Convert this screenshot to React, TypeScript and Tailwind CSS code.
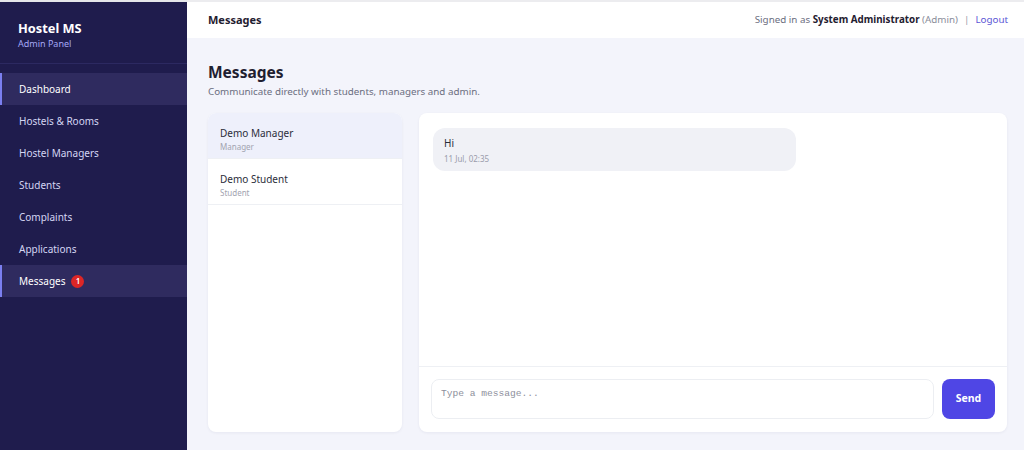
import { useState } from "react";

const navItems = [
    "Dashboard",
    "Hostels & Rooms",
    "Hostel Managers",
    "Students",
    "Complaints",
    "Applications",
    "Messages",
];

const conversations = [
    { name: "Demo Manager", role: "Manager" },
    { name: "Demo Student", role: "Student" },
];

export default function App() {
    const [active, setActive] = useState(0);
    const [draft, setDraft] = useState("");

    return (
        <div className="flex h-[450px] w-[1024px] overflow-hidden bg-[#f3f4fb] font-['Noto_Sans',sans-serif]">
            {/* Sidebar */}
            <aside className="flex w-[187px] shrink-0 flex-col border-t-2 border-[#e5e6ea] bg-[#1f1c4d]">
                <div className="h-[62px] border-b border-[#2c2961] px-[18px] pt-[18px]">
                    <div className="text-[12.8px] font-bold leading-[17px] text-white">Hostel MS</div>
                    <div className="text-[9px] leading-[13px] text-[#a5a8f5]">Admin Panel</div>
                </div>
                <nav className="mt-[9px] flex flex-col">
                    {navItems.map((item) => {
                        const isActive = item === "Dashboard" || item === "Messages";
                        return (
                            <div
                                key={item}
                                className={
                                    isActive
                                        ? "flex h-[32px] items-center gap-[6px] border-l-2 border-[#7b7ff0] bg-[#2f2b5f] pl-[17px] text-[10px] text-white"
                                        : "flex h-[32px] items-center gap-[6px] border-l-2 border-transparent pl-[17px] text-[10px] text-[#d4d5f3]"
                                }
                            >
                                <span>{item}</span>
                                {item === "Messages" && (
                                    <span className="flex h-[13px] w-[13px] items-center justify-center rounded-full bg-[#dc2626] text-[8px] font-semibold leading-none text-white">
                                        1
                                    </span>
                                )}
                            </div>
                        );
                    })}
                </nav>
            </aside>

            {/* Main */}
            <div className="flex flex-1 flex-col">
                <header className="flex h-[38px] shrink-0 items-center justify-between border-t-2 border-[#ececef] bg-white pl-[21px] pr-[16px]">
                    <div className="text-[11px] font-bold text-[#1f2030]">Messages</div>
                    <div className="text-[9.8px] text-[#6b6e80]">
                        Signed in as <span className="font-bold text-[#1f2030]">System Administrator</span>{" "}
                        <span className="text-[#8a8d9a]">(Admin)</span>
                        <span className="mx-[6px] text-[#9a9cab]">|</span>
                        <span className="text-[#5b57d6]">Logout</span>
                    </div>
                </header>

                <main className="flex flex-1 flex-col pb-[18px] pl-[21px] pr-[17px] pt-[23px]">
                    <h1 className="text-[15.5px] font-bold leading-[22px] text-[#1f2030]">Messages</h1>
                    <p className="mt-[1px] text-[9.8px] leading-[16px] text-[#6b6e80]">
                        Communicate directly with students, managers and admin.
                    </p>

                    <div className="mt-[13px] flex flex-1 gap-[17px]">
                        {/* Conversation list */}
                        <div className="w-[194px] shrink-0 overflow-hidden rounded-lg bg-white shadow-[0_1px_3px_rgba(30,30,80,0.06)]">
                            {conversations.map((c, i) => (
                                <button
                                    key={c.name}
                                    onClick={() => setActive(i)}
                                    className={
                                        i === active
                                            ? "block h-[46px] w-full border-b border-[#eef0f4] bg-[#eef0fb] px-[12px] pt-[7px] text-left"
                                            : "block h-[46px] w-full border-b border-[#eef0f4] bg-white px-[12px] pt-[7px] text-left"
                                    }
                                >
                                    <div className="text-[10px] leading-[14px] text-[#2b2d3a]">{c.name}</div>
                                    <div className="mt-[1px] text-[8px] leading-[12px] text-[#a2a4b0]">{c.role}</div>
                                </button>
                            ))}
                        </div>

                        {/* Chat panel */}
                        <div className="flex flex-1 flex-col overflow-hidden rounded-lg bg-white shadow-[0_1px_3px_rgba(30,30,80,0.06)]">
                            <div className="flex-1 px-[14px] pt-[15px]">
                                <div className="h-[43px] w-[363px] rounded-xl bg-[#f0f1f6] px-[11px] pt-[8px]">
                                    <div className="text-[10px] leading-[14px] text-[#2b2d3a]">Hi</div>
                                    <div className="mt-[3px] text-[8px] leading-[11px] text-[#9a9cab]">11 Jul, 02:35</div>
                                </div>
                            </div>
                            <div className="flex h-[66px] shrink-0 gap-[8px] border-t border-[#eef0f4] px-[12px] pt-[12px]">
                                <textarea
                                    value={draft}
                                    onChange={(e) => setDraft(e.target.value)}
                                    placeholder="Type a message..."
                                    className="h-[40px] flex-1 resize-none rounded-lg border border-[#eceef2] px-[9px] py-[7px] font-['Liberation_Mono',monospace] text-[9.6px] text-[#2b2d3a] outline-none placeholder:text-[#8d8f9c]"
                                />
                                <button className="h-[40px] w-[53px] rounded-lg bg-[#4f46e5] text-[10.5px] font-bold text-white">
                                    Send
                                </button>
                            </div>
                        </div>
                    </div>
                </main>
            </div>
        </div>
    );
}
